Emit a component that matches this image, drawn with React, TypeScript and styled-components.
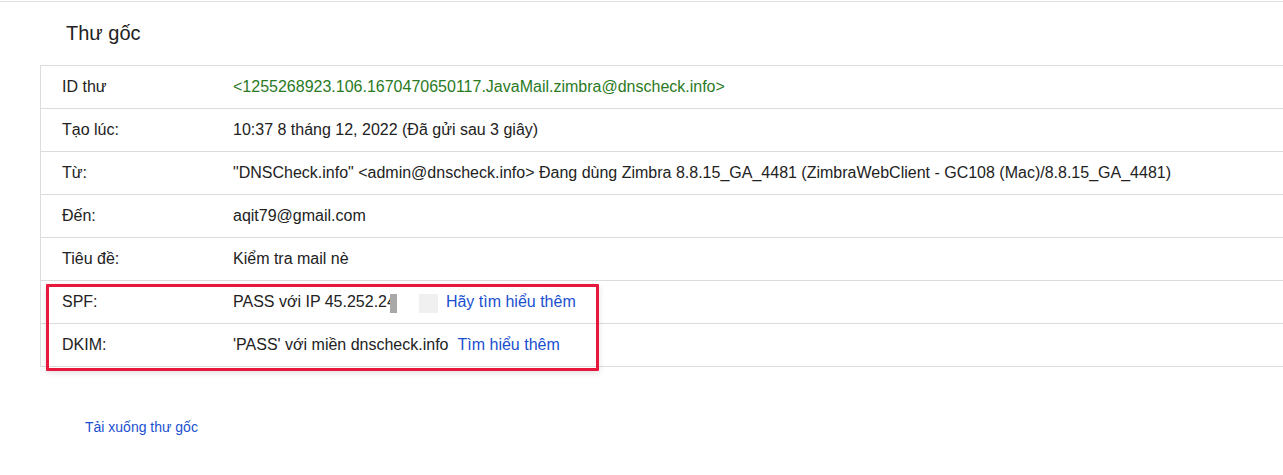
import React from "react";
import styled, { createGlobalStyle } from "styled-components";

const Global = createGlobalStyle`
  html, body { margin: 0; padding: 0; background: #fff; }
  body { font-family: "Liberation Sans", Arial, Helvetica, sans-serif; color: #222; }
`;

const Page = styled.div`
  margin-top: 1px;
  border-top: 1px solid #e3e3e3;
  width: 100%;
  overflow: hidden;
`;

const Header = styled.div`
  height: 63px;
  display: flex;
  align-items: center;
  padding-left: 66px;
  box-sizing: border-box;
`;

const Title = styled.h1`
  margin: 0;
  font-size: 20px;
  font-weight: 400;
  color: #222;
  padding-bottom: 1px;
`;

const Table = styled.div`
  position: relative;
  margin-left: 40px;
  border-top: 1px solid #dcdcdc;
  border-left: 1px solid #dcdcdc;
  width: 1400px;
`;

const Row = styled.div`
  display: grid;
  grid-template-columns: 192px 1fr;
  height: 42px;
  align-items: center;
  border-bottom: 1px solid #dcdcdc;
  font-size: 16px;
  white-space: nowrap;
`;

const Label = styled.div`
  padding-left: 21px;
  color: #222;
`;

const Value = styled.div<{ $green?: boolean }>`
  display: flex;
  align-items: center;
  color: ${(p) => (p.$green ? "#2a7a24" : "#222")};
`;

const Link = styled.a<{ $gap?: number }>`
  color: #1a4fcf;
  text-decoration: none;
  margin-left: ${(p) => p.$gap ?? 8}px;
  cursor: pointer;
`;

const Redact = styled.span<{ $w: number; $bg: string; $ml: number }>`
  display: inline-block;
  width: ${(p) => p.$w}px;
  height: 19px;
  background: ${(p) => p.$bg};
  margin-left: ${(p) => p.$ml}px;
  align-self: center;
  margin-top: 2px;
`;

const Highlight = styled.div`
  position: absolute;
  left: 5px;
  top: 218px;
  width: 547px;
  height: 81px;
  border: 3px solid #e8183c;
  border-radius: 1px;
  box-shadow: 0 2px 6px rgba(0, 0, 0, 0.12);
  pointer-events: none;
`;

const Footer = styled.div`
  padding: 51px 0 0 85px;
`;

const SmallLink = styled.a`
  font-size: 14px;
  color: #1a4fcf;
  text-decoration: none;
  cursor: pointer;
`;

export default function App() {
  return (
    <>
      <Global />
      <Page>
        <Header>
          <Title>Thư gốc</Title>
        </Header>
        <Table>
          <Row>
            <Label>ID thư</Label>
            <Value $green>
              &lt;1255268923.106.1670470650117.JavaMail.zimbra@dnscheck.info&gt;
            </Value>
          </Row>
          <Row>
            <Label>Tạo lúc:</Label>
            <Value>10:37 8 tháng 12, 2022 (Đã gửi sau 3 giây)</Value>
          </Row>
          <Row>
            <Label>Từ:</Label>
            <Value>
              "DNSCheck.info" &lt;admin@dnscheck.info&gt; Đang dùng Zimbra 8.8.15_GA_4481 (ZimbraWebClient - GC108 (Mac)/8.8.15_GA_4481)
            </Value>
          </Row>
          <Row>
            <Label>Đến:</Label>
            <Value>aqit79@gmail.com</Value>
          </Row>
          <Row>
            <Label>Tiêu đề:</Label>
            <Value>Kiểm tra mail nè</Value>
          </Row>
          <Row>
            <Label>SPF:</Label>
            <Value>
              PASS với IP 45.252.24
              <Redact $w={7} $bg="#a8a8a8" $ml={-6} />
              <Redact $w={19} $bg="#f0f0f0" $ml={22} />
              <Link $gap={8}>Hãy tìm hiểu thêm</Link>
            </Value>
          </Row>
          <Row>
            <Label>DKIM:</Label>
            <Value>
              'PASS' với miền dnscheck.info
              <Link $gap={9}>Tìm hiểu thêm</Link>
            </Value>
          </Row>
          <Highlight />
        </Table>
        <Footer>
          <SmallLink>Tải xuống thư gốc</SmallLink>
        </Footer>
      </Page>
    </>
  );
}
